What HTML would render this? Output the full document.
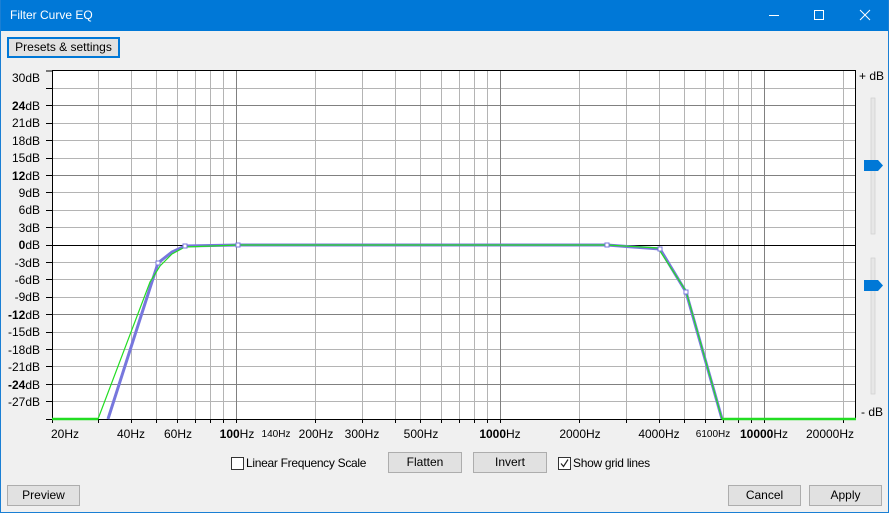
<!DOCTYPE html>
<html><head><meta charset="utf-8"><style>
*{margin:0;padding:0;box-sizing:border-box}
body{width:889px;height:513px;background:#f0f0f0;font-family:"Liberation Sans",sans-serif;font-size:12px;color:#000;position:relative;overflow:hidden}
.win{position:absolute;left:0;top:0;width:889px;height:513px;border:1px solid #1a7fd4;border-top:none}
.title{position:absolute;left:0;top:0;width:889px;height:31px;background:#0078d7;color:#fff}
.title span{position:absolute;left:10px;top:8px;font-size:12px}
.btn{position:absolute;height:21px;border:1px solid #adadad;background:#e1e1e1;text-align:center;line-height:19px;font-size:12px}
.lbl{position:absolute;font-size:12px;white-space:nowrap;letter-spacing:-0.3px}
.cb{position:absolute;width:13px;height:13px;border:1px solid #333;background:#fff}
</style></head><body>
<div class="title"><span>Filter Curve EQ</span>
<svg style="position:absolute;left:760px;top:0" width="129" height="31">
<line x1="9" y1="15.5" x2="19" y2="15.5" stroke="#fff"/>
<rect x="54.5" y="10.5" width="9" height="9" fill="none" stroke="#fff"/>
<line x1="100" y1="10" x2="110" y2="20" stroke="#fff"/><line x1="110" y1="10" x2="100" y2="20" stroke="#fff"/>
</svg></div>
<div class="win"></div>
<div class="btn" style="left:7px;top:37px;width:113px;height:21px;border:2px solid #0078d7;line-height:17px">Presets &amp; settings</div>

<svg style="position:absolute;left:0;top:0" width="889" height="450" font-family="Liberation Sans" font-size="12">
<rect x="52" y="70" width="804" height="349" fill="#fff"/>
<g stroke="#b4b4b4" stroke-width="1">
<path d="M98.5 70V419M131.5 70V419M156.5 70V419M177.5 70V419M195.5 70V419M210.5 70V419M223.5 70V419M315.5 70V419M362.5 70V419M395.5 70V419M420.5 70V419M441.5 70V419M459.5 70V419M474.5 70V419M487.5 70V419M579.5 70V419M626.5 70V419M659.5 70V419M684.5 70V419M705.5 70V419M723.5 70V419M738.5 70V419M751.5 70V419M843.5 70V419"/>
<path d="M52 88.5H856M52 105.5H856M52 123.5H856M52 140.5H856M52 158.5H856M52 175.5H856M52 192.5H856M52 210.5H856M52 227.5H856M52 262.5H856M52 279.5H856M52 297.5H856M52 314.5H856M52 332.5H856M52 349.5H856M52 366.5H856M52 384.5H856M52 401.5H856"/>
</g>
<g stroke="#808080" stroke-width="1">
<path d="M236.5 70V419M500.5 70V419M764.5 70V419M52 105.5H856M52 175.5H856M52 314.5H856M52 384.5H856"/>
</g>
<line x1="52" y1="245.5" x2="856" y2="245.5" stroke="#000"/>
<rect x="52.5" y="70.5" width="803" height="349" fill="none" stroke="#000"/>
<g stroke="#000">
<path d="M46 71H52M46 88.5H52M46 105.5H52M46 123.5H52M46 140.5H52M46 158.5H52M46 175.5H52M46 192.5H52M46 210.5H52M46 227.5H52M46 245.5H52M46 262.5H52M46 279.5H52M46 297.5H52M46 314.5H52M46 332.5H52M46 349.5H52M46 366.5H52M46 384.5H52M46 401.5H52M46 419.5H52"/>
<path d="M52.5 419v4M98.5 419v4M131.5 419v4M156.5 419v4M177.5 419v4M195.5 419v4M210.5 419v4M223.5 419v4M236.5 419v4M315.5 419v4M362.5 419v4M395.5 419v4M420.5 419v4M441.5 419v4M459.5 419v4M474.5 419v4M487.5 419v4M500.5 419v4M579.5 419v4M626.5 419v4M659.5 419v4M684.5 419v4M705.5 419v4M723.5 419v4M738.5 419v4M751.5 419v4M764.5 419v4M843.5 419v4"/>
</g>
<polyline points="108,419 158,263 172,252 185,246 238,245 607,245 660,249 686,292 722,419" fill="none" stroke="#7777dd" stroke-width="3"/>
<polyline points="52,419 98,419 150,282 160,266 172,254 185,247 238,245 607,245 658,248 686,291 722,419 856,419" fill="none" stroke="#22dd22" stroke-width="1.2"/>
<polyline points="52,419 98,419" fill="none" stroke="#22dd22" stroke-width="2.5"/>
<polyline points="722,419 856,419" fill="none" stroke="#22dd22" stroke-width="2.5"/>
<g fill="#fff" stroke="#7777dd"><rect x="156" y="261" width="4" height="4"/><rect x="183" y="244" width="4" height="4"/><rect x="236" y="243" width="4" height="4"/><rect x="605" y="243" width="4" height="4"/><rect x="658" y="247" width="4" height="4"/><rect x="684" y="290" width="4" height="4"/></g>
<g text-anchor="end">
<text x="40" y="82">30dB</text><text x="40" y="110"><tspan font-weight="bold">24</tspan>dB</text><text x="40" y="127">21dB</text><text x="40" y="145">18dB</text><text x="40" y="162">15dB</text><text x="40" y="180"><tspan font-weight="bold">12</tspan>dB</text><text x="40" y="197">9dB</text><text x="40" y="214">6dB</text><text x="40" y="232">3dB</text><text x="40" y="249"><tspan font-weight="bold">0</tspan>dB</text><text x="40" y="267">-3dB</text><text x="40" y="284">-6dB</text><text x="40" y="301">-9dB</text><text x="40" y="319"><tspan font-weight="bold">-12</tspan>dB</text><text x="40" y="336">-15dB</text><text x="40" y="354">-18dB</text><text x="40" y="371">-21dB</text><text x="40" y="389"><tspan font-weight="bold">-24</tspan>dB</text><text x="40" y="406">-27dB</text>
</g>
<g text-anchor="middle">
<text x="65" y="438">20Hz</text><text x="131" y="438">40Hz</text><text x="178" y="438">60Hz</text><text x="237" y="438"><tspan font-weight="bold">100</tspan>Hz</text><text x="276" y="437" font-size="10">140Hz</text><text x="316" y="438">200Hz</text><text x="362" y="438">300Hz</text><text x="421" y="438">500Hz</text><text x="500" y="438"><tspan font-weight="bold">1000</tspan>Hz</text><text x="580" y="438">2000Hz</text><text x="659" y="438">4000Hz</text><text x="713" y="437" font-size="10">6100Hz</text><text x="764" y="438"><tspan font-weight="bold">10000</tspan>Hz</text><text x="830" y="438">20000Hz</text>
</g>
<text x="859" y="80">+ dB</text><text x="861" y="416">- dB</text>
<rect x="871" y="98" width="4" height="136" fill="#e7e7e7" stroke="#cfcfcf" stroke-width="0.7"/>
<rect x="871" y="258" width="4" height="136" fill="#e7e7e7" stroke="#cfcfcf" stroke-width="0.7"/>
<path d="M864 160H878L883 165.5L878 171H864Z" fill="#0078d7"/>
<path d="M864 280H878L883 285.5L878 291H864Z" fill="#0078d7"/>
</svg>

<div class="cb" style="left:231px;top:457px"></div><div class="lbl" style="left:246px;top:456px">Linear Frequency Scale</div>
<div class="btn" style="left:388px;top:452px;width:74px">Flatten</div>
<div class="btn" style="left:473px;top:452px;width:74px">Invert</div>
<div class="cb" style="left:558px;top:457px"><svg width="11" height="11" style="position:absolute;left:0;top:0"><path d="M2 5.5L4.5 8.5L9 1.5" fill="none" stroke="#222" stroke-width="1.2"/></svg></div><div class="lbl" style="left:573px;top:456px">Show grid lines</div>
<div class="btn" style="left:7px;top:485px;width:73px">Preview</div>
<div class="btn" style="left:728px;top:485px;width:73px">Cancel</div>
<div class="btn" style="left:809px;top:485px;width:73px">Apply</div>
</body></html>
